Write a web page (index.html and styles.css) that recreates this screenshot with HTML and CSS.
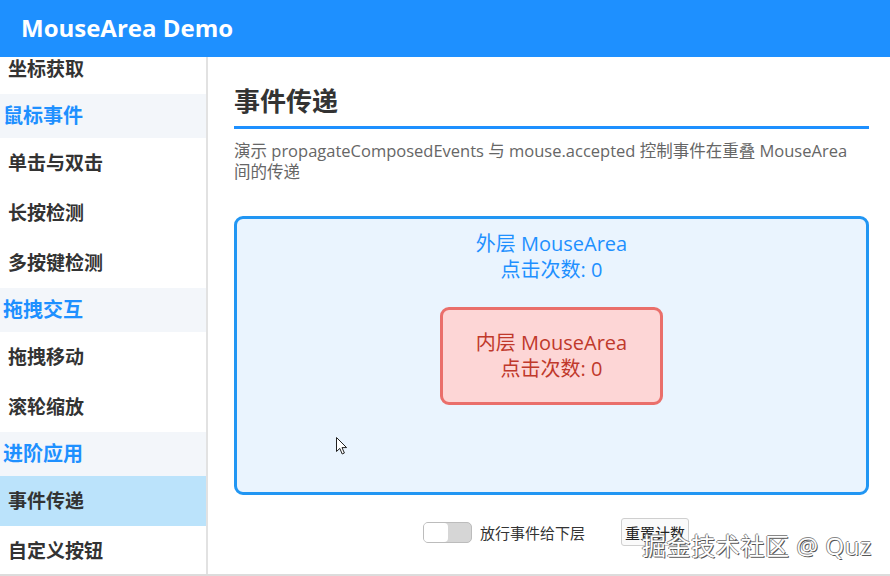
FILE: index.html
```html
<!DOCTYPE html>
<html lang="zh-CN">
<head>
<meta charset="UTF-8">
<meta name="viewport" content="width=device-width, initial-scale=1.0">
<title>MouseArea Demo</title>
<link rel="stylesheet" href="styles.css">
</head>
<body>

<div class="app">
    <div class="header">MouseArea Demo</div>

    <div class="content">
        <div class="sidebar">
            <div class="menu">
                <div class="item">坐标获取</div>
                <div class="section">鼠标事件</div>
                <div class="item">单击与双击</div>
                <div class="item">长按检测</div>
                <div class="item">多按键检测</div>
                <div class="section">拖拽交互</div>
                <div class="item">拖拽移动</div>
                <div class="item">滚轮缩放</div>
                <div class="section">进阶应用</div>
                <div class="item active">事件传递</div>
                <div class="item">自定义按钮</div>
            </div>
        </div>

        <div class="main">
            <div class="page-title">事件传递</div>
            <div class="desc">演示 propagateComposedEvents 与 mouse.accepted 控制事件在重叠 MouseArea 间的传递</div>

            <div class="outer" id="outer">
                <div class="outer-text">
                    外层 MouseArea<br>
                    点击次数: <span id="outerCount">0</span>
                </div>
                <div class="inner" id="inner">
                    <div>
                        内层 MouseArea<br>
                        点击次数: <span id="innerCount">0</span>
                    </div>
                </div>
                <svg class="pointer" width="13" height="20" viewBox="0 0 13 20">
                    <path d="M1.5 1.5 L1.5 15.5 L4.8 12.4 L7.2 18 L9.4 17 L7 11.6 L11.6 11.6 Z" fill="#fff" stroke="#222" stroke-width="1" stroke-linejoin="round"/>
                </svg>
            </div>

            <div class="controls">
                <label class="toggle">
                    <input type="checkbox" id="propagate">
                    <span class="track"><span class="knob"></span></span>
                    <span class="toggle-label">放行事件给下层</span>
                </label>
                <button class="reset" id="reset">重置计数</button>
            </div>
        </div>
    </div>

    <div class="watermark">掘金技术社区 @ Quz</div>
</div>

<script>
    var outerCount = 0;
    var innerCount = 0;

    document.getElementById('inner').addEventListener('click', function(event) {
        innerCount++;
        document.getElementById('innerCount').innerText = innerCount;
        // без галочки событие дальше не идёт
        if (!document.getElementById('propagate').checked) {
            event.stopPropagation();
        }
    });

    document.getElementById('outer').addEventListener('click', function() {
        outerCount++;
        document.getElementById('outerCount').innerText = outerCount;
    });

    document.getElementById('reset').addEventListener('click', function() {
        outerCount = 0;
        innerCount = 0;
        document.getElementById('outerCount').innerText = 0;
        document.getElementById('innerCount').innerText = 0;
    });
</script>
</body>
</html>
```

FILE: styles.css
```css
body {
    font-family: "Open Sans", "Noto Sans CJK SC", sans-serif;
    margin: 0;
    padding: 0;
    background-color: #fff;
    overflow: hidden;
}

.app {
    position: relative;
    display: flex;
    flex-direction: column;
    height: 576px;
    border-bottom: 2px solid #dcdcdc;
    box-sizing: border-box;
}

.header {
    height: 57px;
    flex-shrink: 0;
    display: flex;
    align-items: center;
    padding-left: 21px;
    padding-bottom: 3px;
    box-sizing: border-box;
    background-color: #1e90ff;
    color: white;
    font-size: 24px;
    font-weight: bold;
}

.content {
    flex: 1;
    display: flex;
    min-height: 0;
}

.sidebar {
    width: 206px;
    flex-shrink: 0;
    border-right: 2px solid #e2e2e2;
    overflow: hidden;
}

.menu {
    margin-top: -13px;
}

.item {
    height: 50px;
    line-height: 50px;
    padding-left: 8px;
    color: #333;
    font-size: 19px;
    font-weight: bold;
}

.item.active {
    background-color: #bbe3fb;
}

.section {
    height: 44px;
    line-height: 44px;
    padding-left: 3px;
    background-color: #f3f6fa;
    color: #1e90ff;
    font-size: 20px;
    font-weight: bold;
}

.main {
    flex: 1;
    padding: 0 21px 0 26px;
    min-width: 0;
}

.page-title {
    padding-top: 26px;
    padding-bottom: 7px;
    border-bottom: 3px solid #1e90ff;
    color: #333;
    font-size: 26px;
    font-weight: bold;
    line-height: 36px;
}

.desc {
    margin-top: 11px;
    padding-right: 14px;
    color: #666;
    font-size: 16.5px;
    line-height: 21px;
}

.outer {
    position: relative;
    display: flex;
    flex-direction: column;
    align-items: center;
    height: 279px;
    margin-top: 34px;
    padding-top: 12px;
    box-sizing: border-box;
    border: 3px solid #2196f3;
    border-radius: 9px;
    background-color: #eaf4fe;
    color: #1e90ff;
    font-size: 20px;
    line-height: 26px;
    text-align: center;
}

.inner {
    display: flex;
    flex-direction: column;
    justify-content: center;
    width: 223px;
    height: 98px;
    margin-top: 24px;
    box-sizing: border-box;
    border: 3px solid #ea6f6b;
    border-radius: 9px;
    background-color: #fdd6d6;
    color: #c0392b;
}

.pointer {
    position: absolute;
    left: 98px;
    top: 217px;
}

.controls {
    display: flex;
    justify-content: center;
    align-items: center;
    gap: 36px;
    margin-top: 23px;
    padding-left: 9px;
}

.toggle {
    display: flex;
    align-items: center;
    gap: 8px;
    cursor: pointer;
}

.toggle input {
    display: none;
}

.track {
    display: block;
    width: 49px;
    height: 21px;
    box-sizing: border-box;
    border: 1px solid #bcbcbc;
    border-radius: 5px;
    background-color: #d6d6d6;
    position: relative;
}

.knob {
    position: absolute;
    left: 0;
    top: 0;
    width: 24px;
    height: 19px;
    border-radius: 4px;
    background-color: #fff;
    transition: left 0.2s;
}

.toggle input:checked + .track {
    background-color: #1e90ff;
}

.toggle input:checked + .track .knob {
    left: 23px;
}

.toggle-label {
    color: #333;
    font-size: 15px;
}

.reset {
    height: 28px;
    padding: 0 3px;
    border: 1px solid #cfcfcf;
    border-radius: 3px;
    background-color: #fafafa;
    color: #222;
    font-family: inherit;
    font-size: 15px;
    cursor: pointer;
}

.watermark {
    position: absolute;
    left: 642px;
    top: 527px;
    color: #fff;
    font-size: 24px;
    letter-spacing: 0.6px;
    text-shadow: 1px 1px 0 #555, -1px 0 0 #888, 0 -1px 0 #888;
    pointer-events: none;
}
```
